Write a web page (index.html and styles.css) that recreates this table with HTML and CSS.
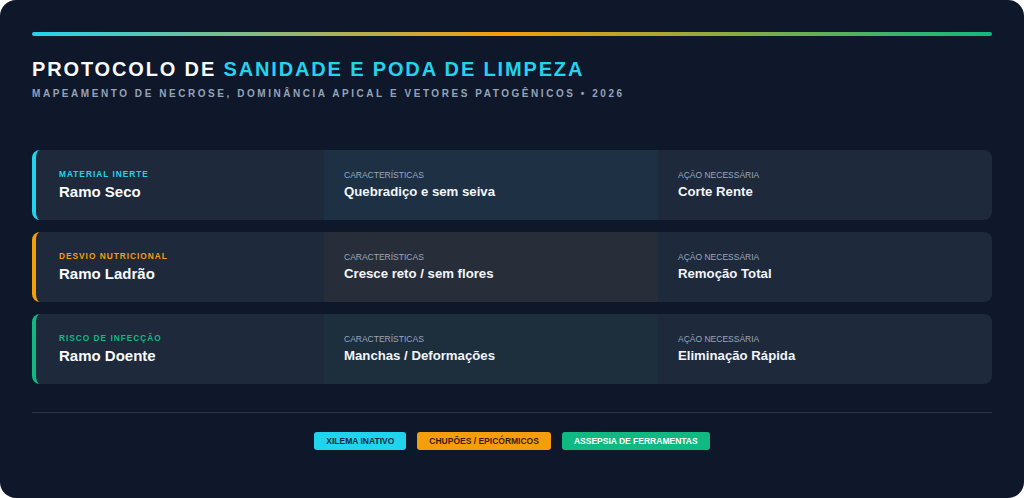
FILE: index.html
```html
<!DOCTYPE html>
<html lang="pt">
<head>
<meta charset="utf-8">
<title>Protocolo de Sanidade e Poda de Limpeza</title>
<link rel="stylesheet" href="styles.css">
</head>
<body>
<main class="panel">
  <div class="accent-bar"></div>
  <header class="head">
    <h1 class="title">PROTOCOLO DE <span class="hl">SANIDADE E PODA DE LIMPEZA</span></h1>
    <p class="subtitle">MAPEAMENTO DE NECROSE, DOMINÂNCIA APICAL E VETORES PATOGÊNICOS • 2026</p>
  </header>

  <section class="rows">
    <div class="row row-cyan">
      <div class="cell cell-main">
        <span class="tag">MATERIAL INERTE</span>
        <span class="name">Ramo Seco</span>
      </div>
      <div class="cell cell-mid">
        <span class="label">CARACTERÍSTICAS</span>
        <span class="value">Quebradiço e sem seiva</span>
      </div>
      <div class="cell">
        <span class="label">AÇÃO NECESSÁRIA</span>
        <span class="value">Corte Rente</span>
      </div>
    </div>

    <div class="row row-orange">
      <div class="cell cell-main">
        <span class="tag">DESVIO NUTRICIONAL</span>
        <span class="name">Ramo Ladrão</span>
      </div>
      <div class="cell cell-mid">
        <span class="label">CARACTERÍSTICAS</span>
        <span class="value">Cresce reto / sem flores</span>
      </div>
      <div class="cell">
        <span class="label">AÇÃO NECESSÁRIA</span>
        <span class="value">Remoção Total</span>
      </div>
    </div>

    <div class="row row-green">
      <div class="cell cell-main">
        <span class="tag">RISCO DE INFECÇÃO</span>
        <span class="name">Ramo Doente</span>
      </div>
      <div class="cell cell-mid">
        <span class="label">CARACTERÍSTICAS</span>
        <span class="value">Manchas / Deformações</span>
      </div>
      <div class="cell">
        <span class="label">AÇÃO NECESSÁRIA</span>
        <span class="value">Eliminação Rápida</span>
      </div>
    </div>
  </section>

  <footer class="foot">
    <span class="badge badge-cyan">XILEMA INATIVO</span>
    <span class="badge badge-orange">CHUPÕES / EPICÓRMICOS</span>
    <span class="badge badge-green">ASSEPSIA DE FERRAMENTAS</span>
  </footer>
</main>
</body>
</html>
```

FILE: styles.css
```css
* { box-sizing: border-box; }

html, body {
  margin: 0;
  padding: 0;
  background: #ffffff;
}

body {
  font-family: "Liberation Sans", Arial, sans-serif;
  width: 1024px;
  height: 498px;
  overflow: hidden;
}

.panel {
  width: 1024px;
  height: 498px;
  background: #0f172a;
  border-radius: 16px;
  padding: 32px;
  display: flex;
  flex-direction: column;
}

.accent-bar {
  height: 4px;
  border-radius: 2px;
  background: linear-gradient(90deg, #22d3ee 0%, #f59e0b 49%, #10b981 100%);
}

.head {
  margin-top: 21px;
}

.title {
  margin: 0;
  font-size: 20px;
  line-height: 24px;
  font-weight: 700;
  letter-spacing: 1.85px;
  color: #f8fafc;
}

.hl { color: #22d3ee; }

.subtitle {
  margin: 6px 0 0;
  font-size: 10px;
  line-height: 14px;
  font-weight: 700;
  letter-spacing: 2.55px;
  color: #94a3b8;
}

.rows {
  margin-top: 49px;
  display: flex;
  flex-direction: column;
  gap: 12px;
}

.row {
  height: 70px;
  display: grid;
  grid-template-columns: 288fr 334fr 334fr;
  background: #1e293b;
  border-radius: 8px;
  border-left: 4px solid #22d3ee;
  overflow: hidden;
}

.row-cyan { border-left-color: #22d3ee; }
.row-orange { border-left-color: #f59e0b; }
.row-green { border-left-color: #10b981; }

.cell {
  display: flex;
  flex-direction: column;
  justify-content: center;
  gap: 4px;
  padding-left: 20px;
}

.cell-main { padding-left: 23px; }

.row-cyan .cell-mid { background: rgba(34, 211, 238, 0.05); }
.row-orange .cell-mid { background: rgba(245, 158, 11, 0.05); }
.row-green .cell-mid { background: rgba(16, 185, 129, 0.04); }

.tag {
  font-size: 8.3px;
  line-height: 10px;
  font-weight: 700;
  letter-spacing: 1px;
}

.row-cyan .tag { color: #22d3ee; }
.row-orange .tag { color: #f59e0b; }
.row-green .tag { color: #10b981; }

.name {
  font-size: 15px;
  line-height: 18px;
  font-weight: 700;
  color: #f8fafc;
}

.label {
  font-size: 8.5px;
  line-height: 10px;
  font-weight: 400;
  color: #9aa8bc;
}

.value {
  font-size: 13.2px;
  line-height: 16px;
  font-weight: 700;
  color: #f1f5f9;
}

.foot {
  margin-top: 28px;
  border-top: 1px solid #283447;
  padding-top: 19px;
  display: flex;
  justify-content: center;
  gap: 11px;
}

.badge {
  font-size: 8.5px;
  line-height: 10px;
  font-weight: 700;
  padding: 4px 12px;
  border-radius: 3px;
}

.badge-cyan { background: #22d3ee; color: #0f2a3f; }
.badge-orange { background: #f59e0b; color: #3b1d06; }
.badge-green { background: #10b981; color: #ffffff; }
```
